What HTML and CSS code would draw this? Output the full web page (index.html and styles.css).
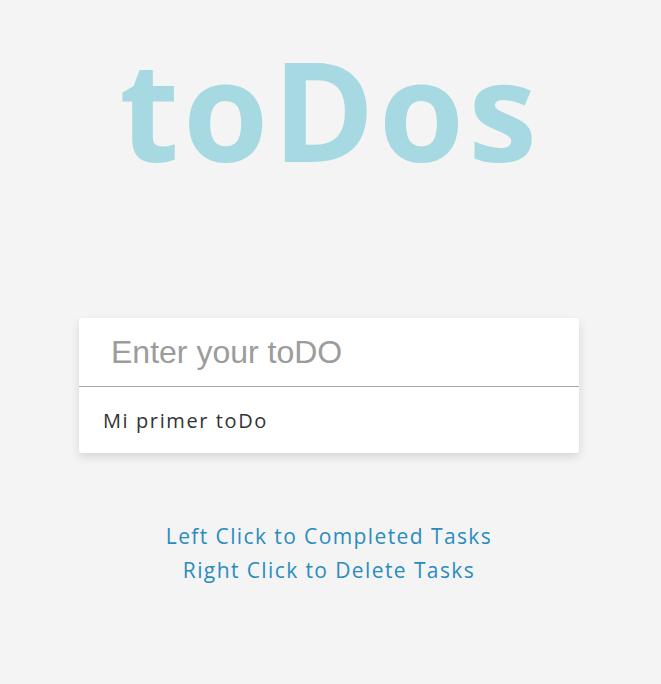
FILE: index.html
```html
<!DOCTYPE html>
<html lang="es">
<head>
<meta charset="utf-8">
<title>toDos</title>
<link rel="stylesheet" href="styles.css">
</head>
<body>
<main class="app">
  <h1 class="title">toDos</h1>
  <section class="card">
    <input class="todo-input" type="text" placeholder="Enter your toDO">
    <ul class="todo-list">
      <li class="todo-item">Mi primer toDo</li>
    </ul>
  </section>
  <div class="help">
    <p>Left Click to Completed Tasks</p>
    <p>Right Click to Delete Tasks</p>
  </div>
</main>
</body>
</html>
```
FILE: styles.css
```css
* { box-sizing: border-box; }
html, body { margin: 0; padding: 0; }
body {
  background: #f4f4f4;
  font-family: "Open Sans", "Noto Sans", sans-serif;
}
.app {
  display: flex;
  flex-direction: column;
  align-items: center;
  padding-right: 3px;
}
.title {
  margin: 23px 0 0 0;
  height: 176px;
  font-size: 138px;
  line-height: 170px;
  font-weight: 700;
  color: #a6d9e2;
  letter-spacing: 4px;
  text-indent: 2px;
}
.card {
  margin-top: 119px;
  width: 500px;
  background: #fff;
  border-radius: 3px;
  box-shadow: 0 4px 10px rgba(0,0,0,0.12);
}
.todo-input {
  display: block;
  width: 100%;
  height: 69px;
  border: none;
  border-bottom: 1px solid #a8a8a8;
  padding: 0 32px;
  font-family: "Liberation Sans", Arial, sans-serif;
  font-size: 32px;
  color: #333;
  background: transparent;
  outline: none;
}
.todo-input::placeholder { color: #9c9c9c; }
.todo-list {
  list-style: none;
  margin: 0;
  padding: 0;
}
.todo-item {
  height: 66px;
  padding: 0 24px;
  display: flex;
  align-items: center;
  font-size: 20px;
  color: #333;
  letter-spacing: 1.6px;
}
.help {
  margin-top: 66px;
  text-align: center;
  color: #2a8cbe;
  font-size: 21px;
  line-height: 34px;
  letter-spacing: 1.4px;
}
.help p { margin: 0; }
```
